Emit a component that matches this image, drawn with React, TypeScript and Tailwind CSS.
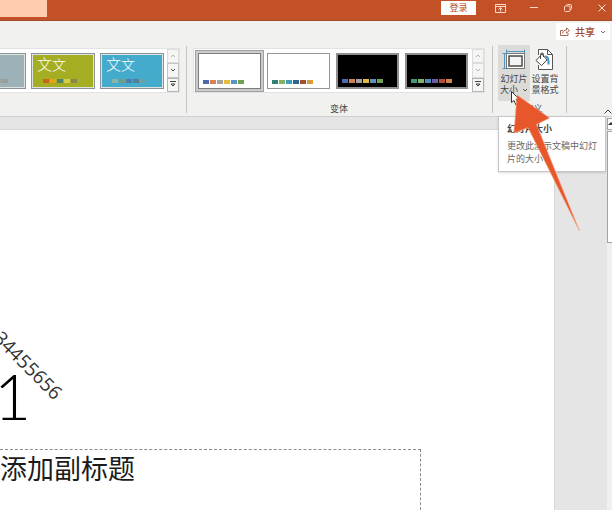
import React from 'react';
import clsx from 'clsx';

type Thumb = { name: string; frame: string; swatches: string[]; selected?: boolean };

const VARIANTS: Thumb[] = [
  {
    name: 'Variant 1',
    frame: 'bg-white border border-[#7c7c7c]',
    swatches: ['bg-[#4a69ac]', 'bg-[#d98150]', 'bg-[#a3a3a3]', 'bg-[#e8bd3c]', 'bg-[#5b94c3]', 'bg-[#6f9f50]'],
    selected: true,
  },
  {
    name: 'Variant 2',
    frame: 'bg-white border border-[#969696]',
    swatches: ['bg-[#2f8272]', 'bg-[#84b35c]', 'bg-[#419ebb]', 'bg-[#2b6592]', 'bg-[#a5502f]', 'bg-[#d99a3c]'],
  },
  {
    name: 'Variant 3',
    frame: 'bg-black border-2 border-[#8f8f8f]',
    swatches: ['bg-[#4e69ac]', 'bg-[#d08055]', 'bg-[#a3a19c]', 'bg-[#e8b740]', 'bg-[#5b90bb]', 'bg-[#6f9f58]'],
  },
  {
    name: 'Variant 4',
    frame: 'bg-black border-2 border-[#8f8f8f]',
    swatches: ['bg-[#3f9580]', 'bg-[#87b068]', 'bg-[#4c8cb8]', 'bg-[#6d5ba8]', 'bg-[#b84a38]', 'bg-[#cf8549]'],
  },
];

const Swatches = ({ colors }: { colors: string[] }) => (
  <span className="flex gap-px">
    {colors.map((c) => (
      <span key={c} className={clsx('h-1 w-1.5', c)} />
    ))}
  </span>
);

const ThemeThumb = ({ name, color, swatches, blank }: { name: string; color: string; swatches: string[]; blank?: boolean }) => (
  <button
    type="button"
    aria-label={name}
    className="flex h-9 w-16 shrink-0 flex-col justify-between border border-[#8b9599] bg-[#dfe3e0] p-px"
  >
    <span className={clsx('flex w-full flex-1 flex-col justify-end pb-1 pl-1', color)}>
      {!blank && (
        <span className="mb-auto flex items-baseline font-['Liberation_Serif','Noto_Sans_CJK_SC',serif] leading-5 font-light text-white">
          <span className="text-[15px]">文</span>
          <span className="text-[14px]">文</span>
        </span>
      )}
      <span className="pl-1.5">
        <Swatches colors={swatches} />
      </span>
    </span>
  </button>
);

const VariantThumb = ({ name, frame, swatches, selected }: Thumb) => (
  <button
    type="button"
    aria-label={name}
    aria-pressed={!!selected}
    className={clsx('flex shrink-0 border p-0.5', selected ? 'border-[#a0a0a0] bg-[#cbcbcb]' : 'border-transparent')}
  >
    <span className={clsx('flex h-9 w-[63px] items-end pb-1 pl-1', frame)}>
      <Swatches colors={swatches} />
    </span>
  </button>
);

const GalleryScroll = ({ label, downOff }: { label: string; downOff?: boolean }) => (
  <div className="flex w-3 shrink-0 flex-col">
    <button type="button" aria-label={`${label} up`} className="flex flex-1 items-center justify-center border border-[#dcdcdc] bg-[#f5f5f4]">
      <svg width="6" height="4" viewBox="0 0 6 4" fill="none" stroke="#b5b5b5"><path d="M1 3l2-2 2 2" /></svg>
    </button>
    <button
      type="button"
      aria-label={`${label} down`}
      className={clsx('flex flex-1 items-center justify-center border bg-[#f5f5f4]', downOff ? 'border-[#dcdcdc]' : 'border-[#c4c4c4]')}
    >
      <svg width="6" height="4" viewBox="0 0 6 4" fill="none" stroke={downOff ? '#b5b5b5' : '#444'}><path d="M1 1l2 2 2-2" /></svg>
    </button>
    <button type="button" aria-label={`${label} more`} className="flex flex-1 items-center justify-center border border-[#b5b5b5] bg-[#f5f5f4]">
      <svg width="6" height="7" viewBox="0 0 6 7" fill="none" stroke="#444"><path d="M0 .5h6M1 3l2 2 2-2z" /></svg>
    </button>
  </div>
);

const Divider = () => <div className="h-[67px] w-px shrink-0 bg-[#c4c4c4]" />;

const TitleBar = () => (
  <header className="flex h-[21px] shrink-0 items-start justify-between border-b border-[#a94a28] bg-[#c35127]">
    <div className="h-[17px] w-[47px] bg-[#ffccb0]" />
    <div className="flex h-4 items-center text-white">
      <button type="button" className="mr-3.5 h-3.5 w-[35px] bg-white text-[9px] leading-3.5 text-[#b04a26]">登录</button>
      <button type="button" aria-label="Ribbon display options" className="flex w-5 justify-center">
        <svg width="11" height="9" viewBox="0 0 11 9" fill="none" stroke="#ffd9c8"><path d="M.5.5h10v8H.5zM.5 2.500h10M5.500 7.500V4M3.500 5.500l2-2 2 2" /></svg>
      </button>
      <button type="button" aria-label="Minimize" className="ml-3.5 flex w-5 justify-center">
        <svg width="8" height="8" viewBox="0 0 8 8" stroke="#ffd9c8"><path d="M0 3.500h8" /></svg>
      </button>
      <button type="button" aria-label="Restore" className="ml-3.5 flex w-5 justify-center">
        <svg width="8" height="8" viewBox="0 0 8 8" fill="none" stroke="#ffd9c8"><rect x=".5" y="2" width="5.5" height="5.5" rx="1" /><path d="M2.500 1.500q0-1 1-1H6q1.500 0 1.500 1.500v2.500q0 1-1 1" /></svg>
      </button>
      <button type="button" aria-label="Close" className="ml-3.5 flex w-5 justify-center">
        <svg width="8" height="8" viewBox="0 0 8 8" stroke="#ffe4d8"><path d="M.5.5l7 7M7.500.5l-7 7" /></svg>
      </button>
    </div>
  </header>
);

const Ribbon = () => (
  <div className="relative shrink-0 border-b border-[#cfcfcf] bg-[#f1f1f0] text-[#444]">
    <div className="flex h-[25px] justify-end pt-0.5 pr-0.5">
      <button type="button" className="flex h-[17px] w-[54px] items-center justify-between rounded-xs bg-white px-1 text-[10px] leading-4 font-medium text-[#a0482c]">
        <svg width="10" height="9" viewBox="0 0 10 9" fill="none" stroke="#a86a58"><path d="M3 3.500H.5v5h7.500V6M2.500 6.500C3 4 4.500 3 6.500 3V1l3 2.500-3 2.500V4.500" /></svg>
        共享
        <svg width="6" height="4" viewBox="0 0 6 4" fill="none" stroke="#8a6a60"><path d="M1 1l2 2 2-2" /></svg>
      </button>
    </div>

    <div className="flex h-[70px] items-start">
      <div className="mt-0.5 mr-[7px] flex h-[45px] shrink-0 border border-l-0 border-[#e2e2e2] bg-white">
        <div className="flex w-[167px] items-center justify-end gap-[5px] overflow-hidden pr-[3px]">
          <ThemeThumb name="Theme grey" color="bg-[#9db1b9]" swatches={['bg-[#8a9a9c]', 'bg-[#a3a9a2]', 'bg-[#7e8f98]', 'bg-[#93a0a0]', 'bg-[#9b9c93]']} blank />
          <ThemeThumb name="Theme green" color="bg-[#a5ae22]" swatches={['bg-[#c9661c]', 'bg-[#e6a417]', 'bg-[#518469]', 'bg-[#d3cf4c]', 'bg-[#8c8455]']} />
          <ThemeThumb name="Theme blue" color="bg-[#44abcd]" swatches={['bg-[#8ab5a0]', 'bg-[#749c88]', 'bg-[#4c7fa5]', 'bg-[#527f9a]', 'bg-[#69a3a6]']} />
        </div>
        <GalleryScroll label="Themes" />
      </div>
      <div className="-ml-px">
        <Divider />
      </div>

      <section className="ml-1.5 flex h-[70px] shrink-0 flex-col items-center justify-between pt-0.5 pb-px">
        <div className="flex h-[45px] border border-[#e2e2e2] bg-white">
          <div className="flex items-center px-px">
            {VARIANTS.map((v) => (
              <VariantThumb key={v.name} {...v} />
            ))}
          </div>
          <GalleryScroll label="Variants" downOff />
        </div>
        <h2 className="text-[9px] leading-3">变体</h2>
      </section>
      <div className="w-[7px] shrink-0" />
      <Divider />

      <section className="ml-[5px] flex h-[70px] shrink-0 flex-col justify-between pb-px">
        <div className="-mt-px flex text-[9px] leading-[11px]">
          <button type="button" aria-describedby="size-tip" className="flex h-14 w-8 flex-col items-center gap-[3px] bg-[#dcdbd8] pt-1">
            <svg width="24" height="21" viewBox="0 0 24 21" fill="none">
              <path d="M4.500.5v4M4.500 2.500h18M22.500.5v4M.5 4.500h4M2.500 4.500v15M.5 19.500h4" stroke="#4f97c2" />
              <rect x="4.500" y="4.500" width="18" height="15" fill="#fff" stroke="#777" />
              <rect x="7" y="7" width="13" height="10" fill="#f4f4f4" stroke="#4a4a4a" strokeWidth="1.500" />
            </svg>
            <span>
              幻灯片
              <span className="flex items-center justify-center gap-1">
                大小
                <svg width="6" height="4" viewBox="0 0 6 4" fill="none" stroke="#555"><path d="M1 1l2 2 2-2" /></svg>
              </span>
            </span>
          </button>
          <button type="button" className="flex h-14 w-[30px] flex-col items-center gap-[3px] pt-1">
            <svg width="20" height="21" viewBox="0 0 20 21" fill="none">
              <path d="M3.500 6V.5h9l5 5v15h-14V16" fill="#fff" stroke="#555" />
              <path d="M12.500.5v5h5" stroke="#555" />
              <path d="M1 11.500L7 5l5 6-5.500 5.500z" fill="#fff" stroke="#444" />
              <path d="M5.500 10V5.500q0-1.500 1.500-1.500t1.500 1.500V8" stroke="#444" />
              <path d="M10 7.500q4-.5 3.500 8" stroke="#4393c4" strokeWidth="2" />
            </svg>
            <span className="w-[27px]">设置背景格式</span>
          </button>
        </div>
        <h2 className="text-center text-[9px] leading-3">自定义</h2>
      </section>
      <div className="w-1.5 shrink-0" />
      <Divider />
    </div>
    <button type="button" aria-label="Collapse ribbon" className="absolute right-0 bottom-0.5">
      <svg width="8" height="5" viewBox="0 0 8 5" fill="none" stroke="#444"><path d="M.5 4.500l3.500-3.500 3.500 3.500" /></svg>
    </button>

    <div
      id="size-tip"
      role="tooltip"
      className="absolute top-full left-[498px] z-10 h-14 w-[108px] border border-[#c6c6c6] bg-white px-2 pt-1 text-[9px] text-[#666] shadow-sm"
    >
      <h3 className="leading-4 font-bold text-[#444]">幻灯片大小</h3>
      <p className="mt-0.5 w-[91px] leading-[13px]">更改此演示文稿中幻灯片的大小</p>
    </div>
  </div>
);

const Slide = () => (
  <main className="flex min-h-0 flex-1 bg-[#e5e5e5]">
    <div className="relative mt-3 mr-[52px] flex flex-1 flex-col overflow-hidden border-t border-r border-[#d6d6d6] bg-white text-[#1c1c1c]">
      <p className="absolute top-[203px] left-[-64px] w-36 rotate-45 text-right font-['Open_Sans',sans-serif] text-[19px] leading-6 text-[#333]">1234455656</p>
      <h1 className="mt-[226px] -ml-1.5 h-[93px] font-['Lato',sans-serif] text-[64px] leading-[80px] font-light text-black">1</h1>
      <div className="mr-[133px] flex-1 border-t border-r border-dashed border-[#8c8c8c] text-[27px] leading-9">添加副标题</div>
    </div>
    <div className="flex w-[5px] flex-col bg-[#f0f0f0] pt-px">
      <button type="button" aria-label="Scroll up" className="flex h-3 items-center border border-r-0 border-[#a5a5a5] bg-white">
        <svg width="4" height="4" viewBox="0 0 4 4"><path d="M0 3l3-3 1 1v2z" fill="#333" /></svg>
      </button>
      <div className="mt-px h-28 border border-r-0 border-[#a5a5a5] bg-white" />
    </div>
  </main>
);

const Pointer = () => (
  <svg className="pointer-events-none absolute top-[90px] left-[508px] z-20" width="76" height="144" viewBox="508 90 76 144">
    <path d="M511.500 91.500v11l2.500-2 2 4.500 2-1-2-4.500h3.500z" fill="#fff" stroke="#333" />
    <path d="M517 95l32.500 23-13 6.500L579.500 231l-51.500-103.500L514 133z" fill="#e8572b" stroke="#f6a283" strokeWidth=".6" />
  </svg>
);

const App = () => (
  <div className="relative flex h-screen w-full flex-col overflow-hidden font-['Noto_Sans_CJK_SC',sans-serif]" lang="zh-CN">
    <TitleBar />
    <Ribbon />
    <Slide />
    <Pointer />
  </div>
);

export default App;
